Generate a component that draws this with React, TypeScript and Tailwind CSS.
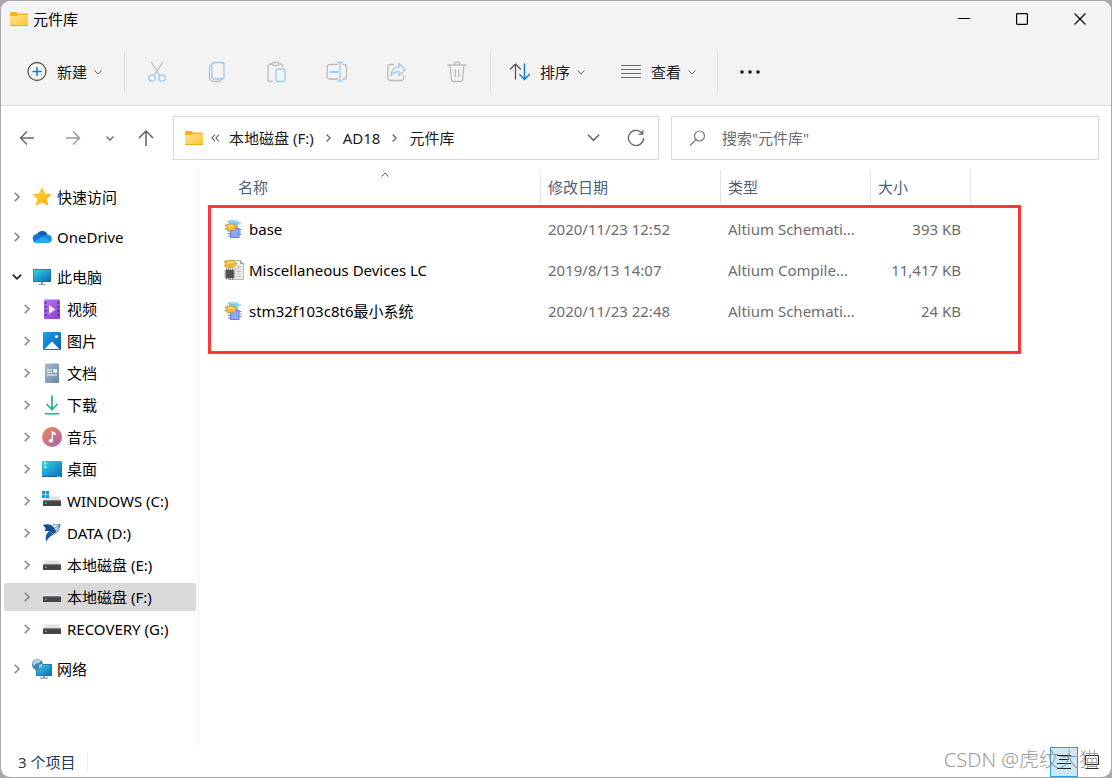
import type { ReactNode } from "react";

type IconProps = { className?: string };

function FolderIcon() {
  return (
    <svg width="18" height="16" viewBox="0 0 18 16" className="shrink-0" aria-hidden="true">
      <defs>
        <linearGradient id="folder" x1="0" y1="0" x2="1" y2="1">
          <stop offset="0" stopColor="#ffe38e" />
          <stop offset="1" stopColor="#fdc62f" />
        </linearGradient>
      </defs>
      <path d="M0 2a1 1 0 0 1 1-1h5.500L8 2.600h9a1 1 0 0 1 1 1V8H0z" fill="#f8b21c" />
      <path d="M0 5h6.500L8 4h10v10a1 1 0 0 1-1 1H1a1 1 0 0 1-1-1z" fill="url(#folder)" />
      <path d="M0 14h18a1 1 0 0 1-1 1H1a1 1 0 0 1-1-1z" fill="#f0a91c" />
    </svg>
  );
}

function ChevronDown({ className = "w-[8px] h-[5px]" }: IconProps) {
  return (
    <svg className={className} viewBox="0 0 8 5" fill="none" stroke="currentColor" strokeWidth="1" aria-hidden="true">
      <path d="M.5.5 4 4 7.500.5" />
    </svg>
  );
}

function ChevronRight({ className = "w-[6px] h-[10px]" }: IconProps) {
  return (
    <svg className={className} viewBox="0 0 6 10" fill="none" stroke="currentColor" strokeWidth="1.600" aria-hidden="true">
      <path d="M.7.7 5 5 .7 9.300" />
    </svg>
  );
}

function ToolSvg({ children }: { children: ReactNode }) {
  return (
    <svg width="22" height="22" viewBox="0 0 22 22" fill="none" strokeWidth="1.300" strokeLinecap="round" strokeLinejoin="round" aria-hidden="true">
      {children}
    </svg>
  );
}

const muted = "#bcbcbc";
const sky = "#9bcaec";

const NewIcon = () => (
  <ToolSvg>
    <circle cx="11" cy="10.500" r="9" stroke="#5a5a5a" />
    <path d="M11 6.500v8M7 10.500h8" stroke="#1377cf" strokeWidth="1.500" />
  </ToolSvg>
);
const CutIcon = () => (
  <ToolSvg>
    <path d="m5.500 1.500 8.500 13.500M16.500 1.500 8 15" stroke={muted} />
    <circle cx="6" cy="17" r="3.200" stroke={sky} />
    <circle cx="16" cy="17" r="3.200" stroke={sky} />
  </ToolSvg>
);
const CopyIcon = () => (
  <ToolSvg>
    <path d="M6 3.500C4.600 4 3.500 5 3.500 6.500v9.500a4.200 4.200 0 0 0 4.200 4.500h4.800c1.500 0 2.500-.7 3-2" stroke={muted} />
    <rect x="6" y="1.500" width="12" height="16.500" rx="2.200" stroke={sky} />
  </ToolSvg>
);
const PasteIcon = () => (
  <ToolSvg>
    <path d="M6 3H4.200C3 3 2 4 2 5v13.500c0 1.200 1 2 2.200 2h2.300M12.500 3h1.800C15.500 3 16.500 4 16.500 5v.5" stroke={muted} />
    <rect x="6" y="1.500" width="6.800" height="3" rx="1.500" stroke={muted} />
    <rect x="10" y="8" width="9" height="12.500" rx="1.500" stroke={sky} />
  </ToolSvg>
);
const RenameIcon = () => (
  <ToolSvg>
    <path d="M11.500 3.500H3.700C2.300 3.500 1.200 4.600 1.200 6v9.500c0 1.400 1.100 2.500 2.500 2.500h7.800M17 3.500h1c1.500 0 2.500 1 2.500 2.500v9.500c0 1.500-1 2.500-2.500 2.500h-1" stroke={muted} />
    <path d="M14 1.500v18.500M11.500 1.500h5M11.500 20.200h5" stroke={sky} />
    <path d="M4.500 11h7" stroke={sky} strokeWidth="2" />
  </ToolSvg>
);
const ShareIcon = () => (
  <ToolSvg>
    <path d="M7.500 3.500H4.800A3 3 0 0 0 1.800 6.500v10a3 3 0 0 0 3 3h10a3 3 0 0 0 3-3V15" stroke={muted} />
    <path d="M13 2.500v3.300C8.500 6 5.500 9.500 5 14.500c2-2.600 4.500-3.800 8-3.800V14.500l6.500-6z" stroke={sky} />
  </ToolSvg>
);
const DeleteIcon = () => (
  <ToolSvg>
    <path d="M2 4h18M8 4a3 3 0 0 1 6 0M4 4l1.500 14.500c.1 1.200 1 2 2.200 2h6.600c1.200 0 2.100-.8 2.200-2L18 4M9.300 9v6.500M12.700 9v6.500" stroke={muted} />
  </ToolSvg>
);
const SortIcon = () => (
  <ToolSvg>
    <path d="M6.500 18V3M1.500 8l5-5 5 5" stroke="#555" />
    <path d="M15.500 3v15M10.700 13.500l4.800 5 4.800-5" stroke="#1a7bd8" strokeWidth="1.500" />
  </ToolSvg>
);
const ViewIcon = () => (
  <ToolSvg>
    <path d="M1.500 4.500h19M1.500 8.500h19M1.500 12.500h19M1.500 16.500h19" stroke="#666" strokeWidth="1" />
  </ToolSvg>
);

function ArrowIcon({ kind }: { kind: "back" | "forward" | "up" }) {
  const d = {
    back: "M15 8H1.500M8 1.500 1.500 8 8 14.500",
    forward: "M1 8h13.500M8 1.500 14.500 8 8 14.500",
    up: "M8 16V1M1 8l7-7 7 7",
  }[kind];
  return (
    <svg width="16" height="16" viewBox="0 0 16 16" fill="none" stroke="currentColor" strokeWidth="1.400" aria-hidden="true">
      <path d={d} />
    </svg>
  );
}

function Svg20({ children }: { children: ReactNode }) {
  return (
    <svg width="20" height="20" viewBox="0 0 20 20" className="shrink-0" aria-hidden="true">
      {children}
    </svg>
  );
}

const StarIcon = () => (
  <Svg20>
    <defs>
      <linearGradient id="star" x1="0" y1="0" x2="1" y2="1">
        <stop offset="0" stopColor="#ffd93a" />
        <stop offset="1" stopColor="#fbab0a" />
      </linearGradient>
    </defs>
    <path d="M10 1.300 12.700 7l6.200.7-4.600 4.200 1.300 6.100L10 15l-5.600 3 1.300-6.100L1.100 7.700 7.300 7z" fill="url(#star)" stroke="#fcc01c" strokeLinejoin="round" />
  </Svg20>
);
const CloudIcon = () => (
  <Svg20>
    <path d="M5 8A5.600 5.600 0 0 1 15.500 7.500L10 12z" fill="#0a5cb8" />
    <path d="M4.500 16A4.600 4.600 0 0 1 5 6.900c2-.2 3.500.4 5.500 1.600L16 12z" fill="#0f78d4" />
    <path d="M10.500 10c1.500-2.700 4.500-3 6-2.300A4.200 4.200 0 0 1 16 16z" fill="#1590e0" />
    <path d="m1.500 14.700 9-5 8.300 4.600c-.7 1.100-1.700 1.700-2.800 1.700H4.500c-1.200 0-2.200-.4-3-1.300z" fill="#28a8ee" />
  </Svg20>
);
const PcIcon = () => (
  <Svg20>
    <defs>
      <linearGradient id="screen" x1="0" y1="0" x2="1" y2="1">
        <stop offset="0" stopColor="#31d6e4" />
        <stop offset="1" stopColor="#0d68bd" />
      </linearGradient>
    </defs>
    <path d="M9 15h2v2h2.500v1h-7v-1H9z" fill="#8597a4" />
    <rect x="1" y="2" width="18" height="13" rx=".8" fill="#1a6ea8" />
    <rect x="1.600" y="2.600" width="16.800" height="11.800" fill="url(#screen)" />
  </Svg20>
);
const VideoIcon = () => (
  <Svg20>
    <defs>
      <linearGradient id="video" x1="0" y1="0" x2="1" y2="1">
        <stop offset="0" stopColor="#b478f2" />
        <stop offset="1" stopColor="#8a3ecf" />
      </linearGradient>
    </defs>
    <rect x="2" y=".5" width="16" height="19.500" rx="1.200" fill="url(#video)" />
    <path d="M3.700 3v16M16.300 3v16" stroke="#582597" strokeWidth="1.800" strokeDasharray="1.800 2.200" />
    <path d="m7 6 6.500 4.500L7 15z" fill="#f3eafd" />
  </Svg20>
);
const PictureIcon = () => (
  <Svg20>
    <defs>
      <linearGradient id="picture" x1="0" y1="0" x2="1" y2="1">
        <stop offset="0" stopColor="#1ca1e8" />
        <stop offset="1" stopColor="#075fb9" />
      </linearGradient>
    </defs>
    <rect x="1" y="1" width="18" height="18" rx="1.200" fill="url(#picture)" />
    <path d="m2.500 18 7.500-7.500 7.500 7.500z" fill="#f4faff" />
    <circle cx="14.500" cy="5.500" r="1.600" fill="#fff" />
  </Svg20>
);
const DocIcon = () => (
  <Svg20>
    <defs>
      <linearGradient id="doc" x1="0" y1="0" x2="1" y2="1">
        <stop offset="0" stopColor="#a8bdd3" />
        <stop offset="1" stopColor="#6685a5" />
      </linearGradient>
    </defs>
    <rect x="3" y=".5" width="14" height="19.500" rx="1.200" fill="url(#doc)" />
    <path d="M5 7h5M5 9.500h5M5 12h10" stroke="#fff" strokeWidth="1.200" />
    <rect x="11.500" y="6.200" width="3.500" height="3.500" fill="#fff" />
  </Svg20>
);
const DownloadIcon = () => (
  <Svg20>
    <path d="M10 .5v14M4.500 9 10 14.500 15.500 9" fill="none" stroke="#1fb18f" strokeWidth="1.700" />
    <path d="M3 18.800h14" stroke="#27bd8c" strokeWidth="1.700" />
  </Svg20>
);
const MusicIcon = () => (
  <Svg20>
    <defs>
      <linearGradient id="music" x1="0" y1="0" x2="1" y2="1">
        <stop offset="0" stopColor="#f08a55" />
        <stop offset="1" stopColor="#a95fae" />
      </linearGradient>
    </defs>
    <circle cx="10" cy="10" r="10" fill="url(#music)" />
    <ellipse cx="8.800" cy="13.700" rx="2.200" ry="1.900" fill="#fff" />
    <path d="M9.700 14V4l4 2v2.300L11 7.200V14z" fill="#fff" />
  </Svg20>
);
const DesktopIcon = () => (
  <Svg20>
    <rect y="2" width="20" height="16" rx="1" fill="url(#screen)" />
    <path d="M2.500 4.500h1.800M2.500 8h1.800" stroke="#fff" strokeWidth="1.800" />
    <path d="M0 17h20a1 1 0 0 1-1 1H1a1 1 0 0 1-1-1z" fill="#155a93" />
    <path d="M15 17.300h1M17 17.300h1" stroke="#fff" />
  </Svg20>
);
const DriveBody = () => (
  <>
    <path d="m3.500 5.500h13l2.500 4.500H1z" fill="#dfe1e4" />
    <rect x="1" y="9.500" width="18" height="5.500" rx=".6" fill="#444" />
    <path d="M1.500 9.800h17" stroke="#696969" strokeWidth=".8" />
    <rect x="3" y="11.500" width="1.600" height="1.600" fill="#35dc45" />
  </>
);
const DriveIcon = () => (
  <Svg20>
    <DriveBody />
  </Svg20>
);
const WindowsDriveIcon = () => (
  <Svg20>
    <DriveBody />
    <path d="M0 0h3.200v3.200H0zM3.800 0H7v3.200H3.800zM0 3.800h3.200V7H0zM3.800 3.800H7V7H3.800z" fill="#159ae0" />
  </Svg20>
);
const DataIcon = () => (
  <Svg20>
    <path d="M.5 2.500C4 .8 8 .8 11 3.500L14.500 8l-3 3.500C10 8.500 6 7.500 2.500 8 4.200 6.500 4 3.800.5 2.500z" fill="#134a90" />
    <path d="M4.500 18.500C2.800 14 4 10.500 7.500 8l4 3.500c-3 1.500-5.500 3.500-7 7z" fill="#1a59a3" />
    <path d="m10.500 2 7.500-.5-1.200 5.500-2.800 3.500-2-5 6-3.500M14 8l4-6" fill="none" stroke="#3375b7" strokeWidth=".9" />
  </Svg20>
);
const NetworkIcon = () => (
  <Svg20>
    <path d="M11 17h2v1.500h3v1.200H8v-1.200h3z" fill="#8d9ba5" />
    <rect x="4" y="5" width="16" height="12" rx=".8" fill="#176eaa" />
    <rect x="4.600" y="5.600" width="14.800" height="10.700" fill="url(#screen)" />
    <circle cx="5.500" cy="5.500" r="5.500" fill="#4385b4" />
    <path d="M3 1c2-1.200 5-.6 6 .8L7 4 4 4.500 1.500 7 .5 4zM7 6l3.500-1C10 8 9 9 7.500 9.500z" fill="#a8d4ea" />
  </Svg20>
);

const SchematicIcon = () => (
  <Svg20>
    <path d="M5 1h5.500c2.500 0 4 1 4.800 2.600H17.500v1H15.300C14.500 6.600 13 7.500 10.500 7.500H5V6H3.500V5H5V3H3.500V2H5z" fill="#7fc8f5" />
    <path d="M6 2h4.500c1.800 0 2.800.6 3.500 1.800" fill="none" stroke="#b7e5ff" />
    <path d="M4 12h2M4 14.500h2M4 17h2M15 10.500h2.500M15 13h2.500M15 15.500h2.500" stroke="#6c87e5" />
    <rect x="6.500" y="9.500" width="8.500" height="9" fill="#8fa5fb" stroke="#6680e2" />
    <path d="M3 5h4.500c2.500 0 3.700 1 4.300 2.600H14v1.200h-2.200C11 10.700 10 11.500 7.500 11.500H3V10H1V9h2V7H1V6h2z" fill="#f2bb38" stroke="#c88c22" strokeWidth=".6" />
    <path d="M4 6.200h3.500c1.500 0 2.400.6 3 1.600H4z" fill="#ffe083" />
  </Svg20>
);
const LibraryIcon = () => (
  <Svg20>
    <path d="M5 .5h11.500l3 3v16H5z" fill="#ededed" stroke="#b6b6b6" />
    <path d="M16.500.5v3h3" fill="#d4d4d4" stroke="#999" />
    <path d="M13 6.500h4M10 9h7M12.500 11.500H17M12.500 14H17M12.500 16.500H17" stroke="#b9b9b9" />
    <path d="M1.500.5H8c2 0 3.200 1 4 2.500h1v1.300h-1C11 6.500 10 7.500 8 7.500H1.500V6H0V5h1.500V2.500H0v-1h1.500z" fill="#efb52f" stroke="#ce9428" strokeWidth=".5" />
    <path d="M3 1.800h5c1.500 0 2 .6 2.500 1.500H3z" fill="#ffe28b" />
    <path d="M2.500 8.500v11M4.500 8.500v11M6.500 8.500v11M8.500 8.500v11M.5 11h10.500M.5 13h10.500M.5 15h10.500M.5 17h10.500" stroke="#606060" strokeWidth=".9" />
    <rect x="1.800" y="10" width="8" height="8" fill="#505050" />
  </Svg20>
);

type NavEntry = { icon: ReactNode; label: string; nested?: boolean; open?: boolean; selected?: boolean };

function NavButton({ icon, label, nested, open, selected }: NavEntry) {
  return (
    <button
      aria-expanded={!!open}
      className={`flex h-7 w-full items-center rounded-[2px] text-left whitespace-nowrap text-black ${nested ? "pl-[18px]" : "pl-2"} ${selected ? "bg-[#d9d9d9]" : ""}`}
    >
      <span className={`flex w-[10px] shrink-0 justify-center ${open ? "text-[#222]" : "text-[#8b8b8b]"}`}>
        {open ? <ChevronDown className="h-[6px] w-[10px] shrink-0 stroke-[1.4]" /> : <ChevronRight />}
      </span>
      <span className="ml-[10px] flex items-center gap-[5px]">
        {icon}
        {label}
      </span>
    </button>
  );
}

const places: NavEntry[] = [
  { label: "视频", icon: <VideoIcon /> },
  { label: "图片", icon: <PictureIcon /> },
  { label: "文档", icon: <DocIcon /> },
  { label: "下载", icon: <DownloadIcon /> },
  { label: "音乐", icon: <MusicIcon /> },
  { label: "桌面", icon: <DesktopIcon /> },
  { label: "WINDOWS (C:)", icon: <WindowsDriveIcon /> },
  { label: "DATA (D:)", icon: <DataIcon /> },
  { label: "本地磁盘 (E:)", icon: <DriveIcon /> },
  { label: "本地磁盘 (F:)", icon: <DriveIcon />, selected: true },
  { label: "RECOVERY (G:)", icon: <DriveIcon /> },
];

const files = [
  { name: "base", date: "2020/11/23 12:52", type: "Altium Schemati...", size: "393 KB", icon: <SchematicIcon /> },
  { name: "Miscellaneous Devices LC", date: "2019/8/13 14:07", type: "Altium Compile...", size: "11,417 KB", icon: <LibraryIcon /> },
  { name: "stm32f103c8t6最小系统", date: "2020/11/23 22:48", type: "Altium Schemati...", size: "24 KB", icon: <SchematicIcon /> },
];

const actions = [
  { label: "剪切", icon: <CutIcon /> },
  { label: "复制", icon: <CopyIcon /> },
  { label: "粘贴", icon: <PasteIcon /> },
  { label: "重命名", icon: <RenameIcon /> },
  { label: "共享", icon: <ShareIcon /> },
  { label: "删除", icon: <DeleteIcon /> },
];

const Divider = () => <span className="h-10 w-px shrink-0 bg-[#e0e0e0]" />;

function MenuButton({ icon, label }: { icon: ReactNode; label: string }) {
  return (
    <button className="flex h-10 items-center text-[#1a1a1a]">
      {icon}
      <span className="ml-[9px]">{label}</span>
      <ChevronDown className="ml-[7px] h-[5px] w-[8px] text-[#666]" />
    </button>
  );
}

function TitleBar() {
  return (
    <header className="flex h-[38px] shrink-0 items-center pr-[2px] pb-[2px] pl-[9px]">
      <FolderIcon />
      <h1 className="ml-[5px] grow">元件库</h1>
      <button aria-label="最小化" className="flex h-full w-[58px] items-center justify-center">
        <svg width="12" height="12" viewBox="0 0 12 12" stroke="#000"><path d="M0 5.500h12" /></svg>
      </button>
      <button aria-label="最大化" className="flex h-full w-[58px] items-center justify-center">
        <svg width="12" height="12" viewBox="0 0 12 12" fill="none" stroke="#000" strokeWidth="1.200"><rect x=".6" y=".6" width="10.800" height="10.800" rx=".8" /></svg>
      </button>
      <button aria-label="关闭" className="flex h-full w-[58px] items-center justify-center">
        <svg width="12" height="12" viewBox="0 0 12 12" stroke="#000" strokeWidth="1.200"><path d="m.5.5 11 11M11.500.5l-11 11" /></svg>
      </button>
    </header>
  );
}

function Toolbar() {
  return (
    <div className="flex h-[67px] shrink-0 items-center border-b border-[#dcdcdc]">
      <div className="w-[123px] pl-[25px]"><MenuButton icon={<NewIcon />} label="新建" /></div>
      <Divider />
      <div className="flex pr-[3px] pl-[2px]">
        {actions.map((a) => (
          <button key={a.label} aria-label={a.label} disabled className="flex h-10 w-[60px] items-center justify-center">
            {a.icon}
          </button>
        ))}
      </div>
      <Divider />
      <div className="flex gap-[35px] pr-[21px] pl-[18px]">
        <MenuButton icon={<SortIcon />} label="排序" />
        <MenuButton icon={<ViewIcon />} label="查看" />
      </div>
      <Divider />
      <button aria-label="更多" className="flex h-10 w-[63px] items-center justify-center">
        <svg width="20" height="4" viewBox="0 0 20 4" fill="#1a1a1a"><circle cx="2" cy="2" r="1.800" /><circle cx="10" cy="2" r="1.800" /><circle cx="18" cy="2" r="1.800" /></svg>
      </button>
    </div>
  );
}

function AddressRow() {
  return (
    <div className="flex h-16 shrink-0 items-center pr-3">
      <nav className="flex w-[172px] shrink-0 items-center" aria-label="导航">
        <button aria-label="后退" className="ml-[18px] text-[#666]"><ArrowIcon kind="back" /></button>
        <button aria-label="前进" className="ml-[30px] text-[#999]"><ArrowIcon kind="forward" /></button>
        <button aria-label="最近" className="ml-[25px] text-[#666]"><ChevronDown className="h-[5px] w-[8px] stroke-[1.3]" /></button>
        <button aria-label="上移" className="ml-[24px] text-[#555]"><ArrowIcon kind="up" /></button>
      </nav>
      <div className="grid min-w-0 grow grid-cols-[486fr_428fr] gap-3">
        <div className="flex h-11 min-w-0 items-center border border-[#d9d9d9] bg-white pr-[13px] pl-[11px]">
          <FolderIcon />
          <svg className="ml-2 shrink-0" width="9" height="8" viewBox="0 0 9 8" fill="none" stroke="#666" strokeWidth="1.100"><path d="M4 .7.900 4 4 7.300M8 .7 4.900 4 8 7.300" /></svg>
          <div className="ml-[9px] flex grow items-center gap-3 whitespace-nowrap text-[#1a1a1a]">
            <a href="#f">本地磁盘 (F:)</a>
            <ChevronRight className="h-[8px] w-[5px] text-[#666]" />
            <a href="#ad18">AD18</a>
            <ChevronRight className="h-[8px] w-[5px] text-[#666]" />
            <a href="#lib">元件库</a>
          </div>
          <button aria-label="历史位置" className="text-[#666]"><ChevronDown className="h-[8px] w-[13px]" /></button>
          <button aria-label="刷新" className="ml-[27px]">
            <svg width="18" height="18" viewBox="0 0 18 18" fill="none" stroke="#666" strokeWidth="1.300"><path d="M15.200 4.500A7.600 7.600 0 1 0 16.600 9M15.800 1v4.200h-4.300" /></svg>
          </button>
        </div>
        <label className="flex h-11 min-w-0 items-center border border-[#d9d9d9] bg-white pl-[17px]">
          <svg width="17" height="17" viewBox="0 0 17 17" fill="none" stroke="#777" strokeWidth="1.200" className="shrink-0"><circle cx="10.500" cy="6" r="5" /><path d="M7 9.500.8 15.700" /></svg>
          <input type="search" aria-label="搜索" placeholder={'搜索"元件库"'} className="ml-4 min-w-0 grow bg-transparent outline-none placeholder:text-[#6d6d6d]" />
        </label>
      </div>
    </div>
  );
}

function FileTable() {
  const head = "h-[34px] border-r border-[#e5e5e5] p-0 text-left font-normal text-[#4c607a]";
  return (
    <main className="relative min-w-0 grow">
      <table className="w-full table-fixed border-separate border-spacing-0 whitespace-nowrap">
        <colgroup>
          <col className="w-[342px]" />
          <col className="w-[180px]" />
          <col className="w-[150px]" />
          <col className="w-[100px]" />
          <col />
        </colgroup>
        <thead>
          <tr>
            <th className={head} aria-sort="ascending">
              <div className="relative ml-[31px] flex h-full items-center pl-2">
                名称
                <ChevronDown className="absolute top-[2px] left-1/2 h-[5px] w-[10px] -translate-x-1/2 rotate-180 text-[#666]" />
              </div>
            </th>
            <th className={head}><span className="pl-[7px]">修改日期</span></th>
            <th className={head}><span className="pl-[7px]">类型</span></th>
            <th className={head}><span className="pl-[7px]">大小</span></th>
            <td />
          </tr>
        </thead>
        <tbody className="text-[#6d6d6d] before:block before:h-1">
          {files.map((f) => (
            <tr key={f.name} className="h-[41px]">
              <td className="p-0 pl-[25px] text-black">
                <div className="flex items-center gap-[5px]">{f.icon}{f.name}</div>
              </td>
              <td className="p-0 pl-[7px]">{f.date}</td>
              <td className="p-0 pl-[7px]">{f.type}</td>
              <td className="p-0 pr-[10px] text-right">{f.size}</td>
              <td />
            </tr>
          ))}
        </tbody>
      </table>
      <div className="pointer-events-none absolute top-[35px] right-[90px] left-[9px] h-[149px] border-[3px] border-[#fb3838]" />
    </main>
  );
}

export default function App() {
  return (
    <div className="flex h-screen min-h-[640px] flex-col bg-[#a8a8a8] p-px font-['Noto_Sans','Noto_Sans_CJK_SC',sans-serif] text-[15px] leading-5">
      <div className="relative flex min-h-0 grow flex-col overflow-hidden rounded-[9px] bg-white">
        <div className="shrink-0 bg-[#f3f3f3]">
          <TitleBar />
          <Toolbar />
        </div>
        <AddressRow />
        <div className="flex min-h-0 grow">
          <aside className="w-[198px] shrink-0 overflow-hidden border-r border-[#f0f0f0] pt-[13px] pr-[2px] pl-[3px]">
            <ul className="flex flex-col gap-3">
              <li><NavButton icon={<StarIcon />} label="快速访问" /></li>
              <li><NavButton icon={<CloudIcon />} label="OneDrive" /></li>
              <li>
                <NavButton icon={<PcIcon />} label="此电脑" open />
                <ul className="mt-1 flex flex-col gap-1">
                  {places.map((p) => (
                    <li key={p.label}><NavButton nested {...p} /></li>
                  ))}
                </ul>
              </li>
              <li><NavButton icon={<NetworkIcon />} label="网络" /></li>
            </ul>
          </aside>
          <FileTable />
        </div>
        <footer className="flex h-[30px] shrink-0 items-center justify-between pr-3 pl-[17px]">
          <span className="border-r border-[#eee] pr-3 text-[#1e395b]">3 个项目</span>
          <div className="flex h-full items-center">
            <button aria-label="详细信息" className="flex h-full w-7 items-center justify-center border border-[#26a0da] bg-[#cce8f6]">
              <svg width="16" height="16" viewBox="0 0 16 16" stroke="#222"><path d="M1 1.500h14M3 5.500h10M1 9.500h14M1 14.500h14" /></svg>
            </button>
            <button aria-label="大图标" className="flex h-full w-[21px] items-center justify-end">
              <svg width="14" height="16" viewBox="0 0 14 16" fill="none" stroke="#222"><path d="M.5 1.500h13v9H.5zM.5 14.500h13" /></svg>
            </button>
          </div>
        </footer>
        <span className="pointer-events-none absolute right-3 bottom-[5px] text-[20px] leading-6 font-light text-[#8c8c8c]/90">CSDN @虎纹大猫</span>
      </div>
    </div>
  );
}
